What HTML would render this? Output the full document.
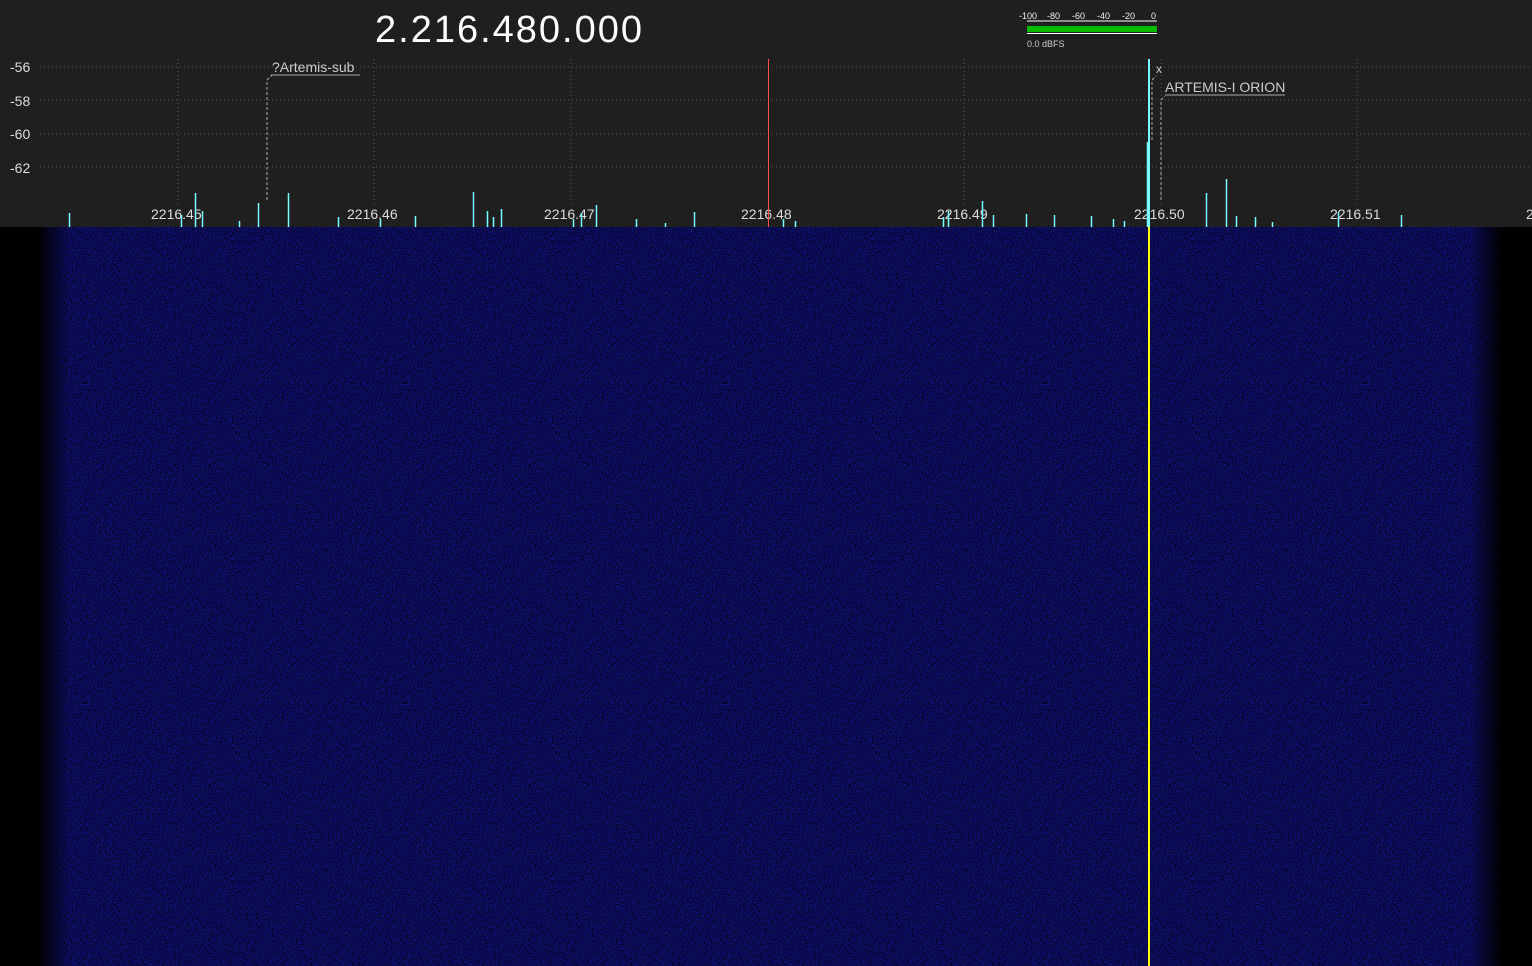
<!DOCTYPE html>
<html><head><style>
body{margin:0;width:1532px;height:966px;overflow:hidden;background:#000;font-family:"Liberation Sans",sans-serif}
#top{position:absolute;left:0;top:0;width:1532px;height:227px;background:#201f20}
#wf{position:absolute;left:0;top:227px;width:1532px;height:739px}
</style></head><body>
<div id="top">
<svg width="1532" height="227" style="position:absolute;left:0;top:0">
<g stroke="#555" stroke-dasharray="1,3" stroke-width="1">
<line x1="40" y1="67" x2="1532" y2="67"/><line x1="40" y1="100" x2="1532" y2="100"/>
<line x1="40" y1="134" x2="1532" y2="134"/><line x1="40" y1="167" x2="1532" y2="167"/>
<line x1="178" y1="59" x2="178" y2="205"/><line x1="374" y1="59" x2="374" y2="205"/>
<line x1="571" y1="59" x2="571" y2="205"/><line x1="964" y1="59" x2="964" y2="205"/>
<line x1="1161" y1="59" x2="1161" y2="205"/><line x1="1357" y1="59" x2="1357" y2="205"/>
</g>
<g fill="#ddd" font-size="14" font-family="Liberation Sans,sans-serif">
<text x="10" y="72">-56</text><text x="10" y="106">-58</text><text x="10" y="139">-60</text><text x="10" y="173">-62</text>
<text x="151" y="219">2216.45</text><text x="347" y="219">2216.46</text><text x="544" y="219">2216.47</text>
<text x="741" y="219">2216.48</text><text x="937" y="219">2216.49</text><text x="1134" y="219">2216.50</text>
<text x="1330" y="219">2216.51</text><text x="1526" y="219">2</text>
</g>
<text x="375" y="42" fill="#fff" font-size="38" letter-spacing="2">2.216.480.000</text>
<g stroke="#aaa" fill="none" stroke-dasharray="3,2"><path d="M267 200 V80 L272 75"/><path d="M1152 140 V80 L1156 76"/><path d="M1161 200 V100 L1165 96"/></g>
<g stroke="#aaa"><line x1="271" y1="75" x2="360" y2="75"/><line x1="1165" y1="95" x2="1285" y2="95"/></g>
<text x="272" y="72" fill="#ccc" font-size="14">?Artemis-sub</text>
<text x="1165" y="92" fill="#ccc" font-size="14">ARTEMIS-I ORION</text>
<text x="1156" y="73" fill="#ccc" font-size="12">x</text>
<line x1="768.5" y1="59" x2="768.5" y2="227" stroke="#ff5050"/>
<line x1="1149" y1="59" x2="1149" y2="227" stroke="#7ff" stroke-width="2"/>
<g stroke="#7ff" stroke-width="1.5">
<path d="M69.5 227V213M181.5 227V215M195.5 227V193M202.5 227V211M239.5 227V221M258.5 227V203M288.5 227V193M338.5 227V217M380.5 227V219M415.5 227V216M473.5 227V192M487.5 227V211M493.5 227V217M501.5 227V209M573.5 227V219M581.5 227V213M596.5 227V205M636.5 227V219M665.5 227V223M694.5 227V212M783.5 227V219M795.5 227V221M943.5 227V217M948.5 227V211M982.5 227V201M993.5 227V215M1026.5 227V214M1054.5 227V215M1091.5 227V216M1113.5 227V219M1124.5 227V221M1147.5 227V142M1206.5 227V193M1226.5 227V179M1236.5 227V216M1255.5 227V217M1272.5 227V222M1338.5 227V212M1401.5 227V215"/>
</g>
<line x1="1027" y1="21" x2="1157" y2="21" stroke="#fff"/>
<rect x="1027" y="26" width="130" height="6" fill="#0b0"/>
<line x1="1027" y1="33.5" x2="1157" y2="33.5" stroke="#fff"/>
<g fill="#eee" font-size="9"><text x="1019" y="19">-100</text><text x="1047" y="19">-80</text><text x="1072" y="19">-60</text><text x="1097" y="19">-40</text><text x="1122" y="19">-20</text><text x="1151" y="19">0</text></g>
<text x="1027" y="47" fill="#ccc" font-size="9">0.0 dBFS</text>
</svg>
</div>
<svg id="wf" width="1532" height="739">
<defs>
<filter id="n" x="0" y="0" width="100%" height="100%"><feTurbulence type="fractalNoise" baseFrequency="0.8" numOctaves="2" seed="3"/><feColorMatrix values="0 0 0 0 0  0 0 0 0 0  0 0 0 0 0  2.4 0 0 0 -0.9"/></filter>
<linearGradient id="g" x1="0" x2="1"><stop offset="0" stop-color="#000" stop-opacity="1"/><stop offset="0.025" stop-color="#000" stop-opacity="1"/><stop offset="0.045" stop-color="#000" stop-opacity="0"/><stop offset="0.96" stop-color="#000" stop-opacity="0"/><stop offset="0.98" stop-color="#000" stop-opacity="1"/><stop offset="1" stop-color="#000" stop-opacity="1"/></linearGradient>
</defs>
<rect width="1532" height="739" fill="#10107a"/>
<rect width="1532" height="739" filter="url(#n)"/>
<rect width="1532" height="739" fill="url(#g)"/>
<line x1="1149" y1="0" x2="1149" y2="739" stroke="#ff0" stroke-width="2"/>
</svg>
</body></html>
